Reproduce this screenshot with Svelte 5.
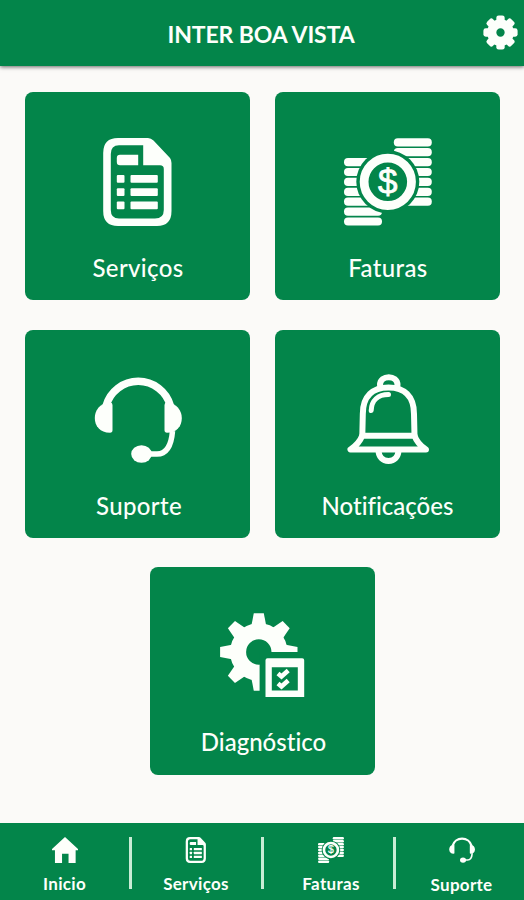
<script>
  const title = 'INTER BOA VISTA';

  const cards = [
    { icon: 'services', label: 'Serviços' },
    { icon: 'bills', label: 'Faturas' },
    { icon: 'support', label: 'Suporte' },
    { icon: 'bell', label: 'Notificações' },
    { icon: 'diagnostic', label: 'Diagnóstico' }
  ];

  const tabs = [
    { icon: 'home', label: 'Inicio' },
    { icon: 'services', label: 'Serviços' },
    { icon: 'bills', label: 'Faturas' },
    { icon: 'support', label: 'Suporte' }
  ];

  const coinRows = [0, 1, 2, 3, 4, 5, 6];
  const teeth = [0, 45, 90, 135, 180, 225, 270, 315];
  // the checklist covers the lower right quarter of the diagnostic gear
  const visibleTeeth = [180, 225, 270, 315, 0, 45, 90];
</script>

{#snippet icon(name)}
  <svg class="icon" viewBox="0 0 88 88" aria-hidden="true">
    {#if name === 'services'}
      <path
        fill="currentColor"
        fill-rule="evenodd"
        d="M24 0H54Q57 0 59.500 2.500L76 20Q77.500 22 77.500 25V73Q77.500 88 63 88H24Q9.200 88 9.200 73V15Q9.200 0 24 0ZM25 7.200Q16.800 7.200 16.800 16V72Q16.800 80.600 25 80.600H61Q69.800 80.600 69.800 72V31Q69.800 27.300 66 27.300H49.200V7.200Z"
      />
      <path fill="currentColor" d="M26 16.700H44.200V27.300H26Q22.800 27.300 22.800 24V20Q22.800 16.700 26 16.700Z" />
      {#each [37, 50.2, 63.4] as y}
        <rect x="22.800" {y} width="7.700" height="7.800" rx="1" fill="currentColor" />
        <rect x="36.500" {y} width="27.300" height="7.800" rx="1" fill="currentColor" />
      {/each}
    {:else if name === 'bills'}
      {#each coinRows as row}
        <rect x="49.800" y={row * 9.9 + 0.2} width="38" height="8.200" rx="4" fill="currentColor" />
        <rect x="0" y={row * 9.9 + 20} width="38" height="8.200" rx="4" fill="currentColor" />
      {/each}
      <circle class="hole" cx="43.800" cy="43.800" r="31.500" />
      <circle cx="43.800" cy="43.800" r="23.700" fill="none" stroke="currentColor" stroke-width="8.800" />
      <text class="dollar" x="43.800" y="55.500" text-anchor="middle">$</text>
    {:else if name === 'support'}
      <path d="M12 30A33.400 33.400 0 0 1 76.500 30" fill="none" stroke="currentColor" stroke-width="7.500" />
      <path fill="currentColor" d="M16.500 26.500Q18.500 26.500 18.500 29V54Q18.500 56.700 16 56.700C6 56.700 0.800 50 0.800 42C0.800 35 5 27 16.500 26.500Z" />
      <path fill="currentColor" d="M72.500 26.500Q70.500 26.500 70.500 29V54Q70.500 56.700 73 56.700C83 56.700 87.800 50 87.800 42C87.800 35 83 27 72.500 26.500Z" />
      <path d="M54 78H63C73 78 77.500 68 78.500 55" fill="none" stroke="currentColor" stroke-width="5.500" />
      <ellipse cx="47.500" cy="78" rx="10.300" ry="8.800" fill="currentColor" />
    {:else if name === 'bell'}
      <g fill="none" stroke="currentColor" stroke-width="6" stroke-linecap="round" stroke-linejoin="round">
        <path d="M36 9C36 -1.500 53.500 -1.500 53.500 9" />
        <path d="M18.300 59.700L18.800 38C18.800 20 29 11.500 44.500 11.500C60 11.500 70 20 70 38L70.500 59.700" />
        <path d="M18.300 59.700H70.500M18.300 59.700Q15 68 6.500 73.500H82Q73.500 68 70.500 59.700" />
        <path d="M34.500 75C35 81 38.500 85 44.500 85C50.500 85 54 81 54.500 75" />
        <path d="M27.200 34.500C27.500 24.500 34 18.500 44.500 18.500" stroke-width="5" />
      </g>
    {:else if name === 'diagnostic'}
      <g transform="translate(0 -8)">
        {#each visibleTeeth as angle}
          <path
            fill="currentColor"
            d="M32.500 20L34.800 8.300H44.800L47.100 20Z"
            transform="rotate({angle} 39.800 47)"
          />
        {/each}
        <circle cx="39.800" cy="47" r="20.700" fill="none" stroke="currentColor" stroke-width="16" />
        <path class="hole" d="M40.600 47H90V90H40.600Z" />
        <path
          fill="currentColor"
          fill-rule="evenodd"
          d="M48.500 53.200H83.200Q85.200 53.200 85.200 55.200V92H46.500V55.200Q46.500 53.200 48.500 53.200ZM52.800 62.300V85.500H78.800V62.300Z"
        />
        <path d="M59 68.500L62.500 71.500L69.200 65.500M59 78.500L62.500 81.500L69.200 75.500" fill="none" stroke="currentColor" stroke-width="4.500" />
      </g>
    {:else if name === 'home'}
      <path fill="currentColor" d="M44 0L88 41V45H80V88H56V57H34V88H10V45H0V41Z" />
    {:else if name === 'settings'}
      {#each teeth as angle}
        <rect x="33.500" y="1" width="21" height="30" rx="6" fill="currentColor" transform="rotate({angle} 44 44)" />
      {/each}
      <circle cx="44" cy="44" r="22" fill="none" stroke="currentColor" stroke-width="23" />
    {/if}
  </svg>
{/snippet}

<div class="app">
  <header>
    <h1>{title}</h1>
    <button class="settings" aria-label="Configurações">
      {@render icon('settings')}
    </button>
  </header>

  <main>
    {#each cards as card}
      <button class="card">
        {@render icon(card.icon)}
        <span class="label {card.icon}">{card.label}</span>
      </button>
    {/each}
  </main>

  <nav>
    {#each tabs as tab}
      <button class="tab {tab.icon}">
        {@render icon(tab.icon)}
        <span>{tab.label}</span>
      </button>
    {/each}
  </nav>
</div>

<style>
  :global(body) {
    background: #fbfaf8;
  }

  .app {
    display: flex;
    flex-direction: column;
    width: 524px;
    height: 900px;
    overflow: hidden;
    background: #fbfaf8;
    font-family: Lato, 'Open Sans', sans-serif;
    font-variant-ligatures: none;
    color: #fdfffb;
  }

  button {
    margin: 0;
    padding: 0;
    border: 0;
    background: none;
    font: inherit;
    color: inherit;
    cursor: pointer;
  }

  .icon {
    display: block;
    overflow: visible;
  }

  .hole {
    fill: #03854a;
  }

  .dollar {
    font: 500 35px 'Liberation Sans', sans-serif;
    fill: currentColor;
    stroke: currentColor;
    stroke-width: 0.8px;
  }

  header {
    display: grid;
    grid-template-columns: 42px 1fr 42px;
    align-items: center;
    height: 66px;
    box-sizing: border-box;
    padding: 2px 0 0;
    background: #03854a;
    box-shadow: 0 1px 4px rgba(0, 0, 0, 0.6);
  }

  h1 {
    grid-column: 2;
    margin: 0 2px 0 0;
    text-align: center;
    font-size: 23px;
    line-height: 28px;
    font-weight: 700;
    letter-spacing: -0.1px;
  }

  .settings .icon {
    width: 35px;
    height: 35px;
    margin: 0 0 3px 1px;
  }

  main {
    flex: 1;
    display: flex;
    flex-wrap: wrap;
    align-content: flex-start;
    justify-content: center;
    gap: 29.500px 25px;
    padding: 26px 24px 0 25px;
  }

  .card {
    display: flex;
    flex-direction: column;
    align-items: center;
    width: 225px;
    height: 208px;
    box-sizing: border-box;
    padding-top: 46px;
    border-radius: 8px;
    background: #03854a;
  }

  .card .icon {
    width: 88px;
    height: 88px;
  }

  .label {
    margin-top: 27px;
    padding-left: 1px;
    font-size: 24px;
    line-height: 30px;
    font-weight: 500;
    letter-spacing: 0.35px;
  }

  .label.support {
    padding-left: 3px;
  }

  .label.bell,
  .label.diagnostic {
    padding-left: 0;
    letter-spacing: 0;
  }

  .label.diagnostic {
    margin-top: 26px;
    padding-left: 2px;
  }

  nav {
    display: grid;
    grid-template-columns: 131px 132px 132px 129px;
    height: 77px;
    background: #03854a;
  }

  .tab {
    position: relative;
    display: flex;
    flex-direction: column;
    align-items: center;
    padding-top: 14px;
    font-size: 17px;
    line-height: 20px;
    font-weight: 700;
    letter-spacing: 0.3px;
  }

  .tab.home,
  .tab.services {
    padding-right: 2px;
  }

  .tab.bills,
  .tab.support {
    padding-left: 4px;
  }

  .tab + .tab::before {
    content: '';
    position: absolute;
    left: -2px;
    top: 14px;
    width: 3px;
    height: 52px;
    background: #c9ecd5;
  }

  .tab .icon {
    width: 26px;
    height: 26px;
  }

  .tab span {
    margin-top: 11px;
  }

  .tab.support span {
    margin-top: 12px;
  }
</style>
